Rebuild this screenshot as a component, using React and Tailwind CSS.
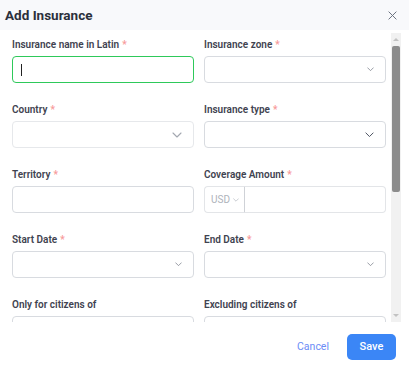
import React from 'react';

const Chevron = ({ w = 8, color = '#6b7280' }) => (
  <svg width={w} height={w / 2 + 1} viewBox="0 0 10 6" fill="none">
    <polyline points="1,1 5,5 9,1" stroke={color} strokeWidth="1.1" strokeLinecap="round" strokeLinejoin="round" />
  </svg>
);

const Label = ({ text, required }) => (
  <div className="h-[14px] text-[10px] leading-[14px] font-semibold text-[#3f4350] whitespace-nowrap">
    {text}
    {required && <span className="text-[#f79a9a] ml-[3px]">*</span>}
  </div>
);

function Field({ label, required, children }) {
  return (
    <div className="flex flex-col gap-[4px] mb-[20px]">
      <Label text={label} required={required} />
      {children}
    </div>
  );
}

const TextBox = ({ focused }) => (
  <div
    className={
      'h-[27px] shrink-0 rounded-[4px] bg-white flex items-center px-[8px] ' +
      (focused ? 'border border-[#2ec95a]' : 'border border-[#d8dbe0]')
    }
  >
    {focused && <span className="w-[1px] h-[12px] bg-[#222]" />}
  </div>
);

const SelectBox = ({ chevron = 7, chevronColor = '#6b7280', light }) => (
  <div
    className={
      'h-[27px] rounded-[4px] bg-white flex items-center justify-end pr-[11px] border ' +
      (light ? 'border-[#e6e8eb]' : 'border-[#d8dbe0]')
    }
  >
    <Chevron w={chevron} color={chevronColor} />
  </div>
);

const AmountBox = () => (
  <div className="h-[27px] flex">
    <div className="w-[41px] flex items-center gap-[3px] pl-[6px] border border-[#e3e5e8] rounded-l-[4px] border-r-[#cfd2d7]">
      <span className="text-[10px] text-[#aeb3bb]">USD</span>
      <Chevron w={6} color="#aeb3bb" />
    </div>
    <div className="flex-1 border border-l-0 border-[#e3e5e8] rounded-r-[4px]" />
  </div>
);

// fake scrollbar drawn to match the screenshot
const ScrollBar = () => (
  <div className="w-[10px] mt-[3px] bg-[#f1f1f1] flex flex-col items-center">
    <div className="h-[13px] flex items-center justify-center">
      <div className="w-0 h-0 border-l-[3px] border-r-[3px] border-b-[3px] border-l-transparent border-r-transparent border-b-[#c2c2c2]" />
    </div>
    <div className="w-[8px] h-[146px] bg-[#8c8c8c] rounded-t-[2px] rounded-b-[2px]" />
    <div className="flex-1" />
    <div className="h-[13px] flex items-center justify-center">
      <div className="w-0 h-0 border-l-[3px] border-r-[3px] border-t-[3px] border-l-transparent border-r-transparent border-t-[#c2c2c2]" />
    </div>
  </div>
);

export default function App() {
  return (
    <div className="w-[409px] h-[372px] bg-white flex flex-col overflow-hidden" style={{ fontFamily: 'Roboto, "Liberation Sans", sans-serif' }}>
      <div className="h-[30px] shrink-0 bg-[#f8f9fb] flex items-center justify-between pl-[5px] pr-[12px]">
        <span className="text-[13.5px] font-bold text-[#2b303b]">Add Insurance</span>
        <svg width="9" height="9" viewBox="0 0 10 10" fill="none">
          <path d="M1 1L9 9M9 1L1 9" stroke="#6b7280" strokeWidth="1.1" strokeLinecap="round" />
        </svg>
      </div>

      <div className="h-[292px] shrink-0 flex pr-[8px]">
        <div className="w-[391px] overflow-hidden pt-[8px] pl-[12px] pr-[5px]">
          <div className="grid grid-cols-2 gap-x-[10px]">
            <Field label="Insurance name in Latin" required>
              <TextBox focused />
            </Field>
            <Field label="Insurance zone" required>
              <SelectBox chevron={7} chevronColor="#7b818b" />
            </Field>
            <Field label="Country" required>
              <SelectBox chevron={10} chevronColor="#a3a8b0" light />
            </Field>
            <Field label="Insurance type" required>
              <SelectBox chevron={9} chevronColor="#4b5160" />
            </Field>
            <Field label="Territory" required>
              <TextBox />
            </Field>
            <Field label="Coverage Amount" required>
              <AmountBox />
            </Field>
            <Field label="Start Date" required>
              <SelectBox chevron={7} chevronColor="#7b818b" />
            </Field>
            <Field label="End Date" required>
              <SelectBox chevron={7} chevronColor="#7b818b" />
            </Field>
            <Field label="Only for citizens of">
              <TextBox />
            </Field>
            <Field label="Excluding citizens of">
              <TextBox />
            </Field>
          </div>
        </div>
        <ScrollBar />
      </div>

      <div className="flex-1 flex items-center justify-end gap-[8px] pr-[13px]">
        <button className="h-[26px] px-[10px] text-[10.5px] text-[#6b8cf6]">Cancel</button>
        <button className="h-[26px] w-[49px] rounded-[5px] bg-[#3b86f6] text-white text-[11px] font-medium">Save</button>
      </div>
    </div>
  );
}
